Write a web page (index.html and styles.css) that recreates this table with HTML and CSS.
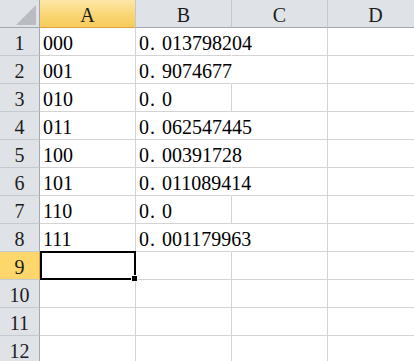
FILE: index.html
```html
<!DOCTYPE html>
<html>
<head>
<meta charset="utf-8">
<link rel="stylesheet" href="styles.css">
</head>
<body>
<div class="sheet">
  <div class="corner"><span class="tri"></span></div>
  <div class="col-hd col-sel">A</div>
  <div class="col-hd">B</div>
  <div class="col-hd">C</div>
  <div class="col-hd">D</div>

  <div class="row-hd">1</div><div class="cell">000</div><div class="cell spill">0<span class="dot">.</span>013798204</div><div class="cell"></div><div class="cell"></div>
  <div class="row-hd">2</div><div class="cell">001</div><div class="cell spill">0<span class="dot">.</span>9074677</div><div class="cell"></div><div class="cell"></div>
  <div class="row-hd">3</div><div class="cell">010</div><div class="cell">0<span class="dot">.</span>0</div><div class="cell"></div><div class="cell"></div>
  <div class="row-hd">4</div><div class="cell">011</div><div class="cell spill">0<span class="dot">.</span>062547445</div><div class="cell"></div><div class="cell"></div>
  <div class="row-hd">5</div><div class="cell">100</div><div class="cell spill">0<span class="dot">.</span>00391728</div><div class="cell"></div><div class="cell"></div>
  <div class="row-hd">6</div><div class="cell">101</div><div class="cell spill">0<span class="dot">.</span>011089414</div><div class="cell"></div><div class="cell"></div>
  <div class="row-hd">7</div><div class="cell">110</div><div class="cell">0<span class="dot">.</span>0</div><div class="cell"></div><div class="cell"></div>
  <div class="row-hd">8</div><div class="cell">111</div><div class="cell spill">0<span class="dot">.</span>001179963</div><div class="cell"></div><div class="cell"></div>
  <div class="row-hd row-sel">9</div><div class="cell active"><span class="handle"></span></div><div class="cell"></div><div class="cell"></div><div class="cell"></div>
  <div class="row-hd">10</div><div class="cell"></div><div class="cell"></div><div class="cell"></div><div class="cell"></div>
  <div class="row-hd">11</div><div class="cell"></div><div class="cell"></div><div class="cell"></div><div class="cell"></div>
  <div class="row-hd">12</div><div class="cell"></div><div class="cell"></div><div class="cell"></div><div class="cell"></div>
</div>
</body>
</html>
```

FILE: styles.css
```css
html, body {
  margin: 0;
  padding: 0;
  background: #ffffff;
  overflow: hidden;
}

.sheet {
  display: grid;
  grid-template-columns: 40px repeat(4, 96px);
  grid-auto-rows: 28px;
  width: 424px;
  font-family: "Liberation Serif", "Times New Roman", serif;
  font-size: 20px;
  color: #000000;
}

.sheet > div {
  box-sizing: border-box;
  white-space: nowrap;
  line-height: 23px;
  padding-top: 4px;
}

.corner {
  background: #dfe3e8;
  border-right: 1px solid #a3a9b0;
  border-bottom: 1px solid #a3a9b0;
  display: flex;
  justify-content: flex-end;
  align-items: flex-end;
  padding: 0 3px 2px 0 !important;
}

.tri {
  width: 20px;
  height: 20px;
  background: #b9bdc2;
  clip-path: polygon(100% 0, 100% 100%, 0 100%);
}

.col-hd {
  background: #dfe3e8;
  border-right: 1px solid #c3c8ce;
  border-bottom: 1px solid #a3a9b0;
  text-align: center;
  color: #1c1c1c;
}

.col-sel {
  background: linear-gradient(#fde7a8, #f9d471 60%, #f8cc5c);
  border-bottom-color: #e2a23c;
  border-right-color: #c3c8ce;
}

.row-hd {
  background: #dfe3e8;
  border-right: 1px solid #a3a9b0;
  border-bottom: 1px solid #c5cad0;
  text-align: center;
  color: #1c1c1c;
}

.row-sel {
  background: #fdd76b;
  border-right-color: #e2a23c;
}

.cell {
  border-right: 1px solid #d4d4d4;
  border-bottom: 1px solid #d4d4d4;
  padding-left: 3px;
}

.spill {
  border-right-color: transparent;
}

.dot {
  margin-left: 1px;
  margin-right: 7px;
}

.active {
  position: relative;
}

.active::after {
  content: "";
  position: absolute;
  top: -1px;
  left: 0;
  right: -1px;
  bottom: -1px;
  border: 2px solid #000000;
}

.handle {
  position: absolute;
  right: -3px;
  bottom: -3px;
  width: 5px;
  height: 5px;
  background: #000000;
  border: 1px solid #ffffff;
  z-index: 1;
}
```
